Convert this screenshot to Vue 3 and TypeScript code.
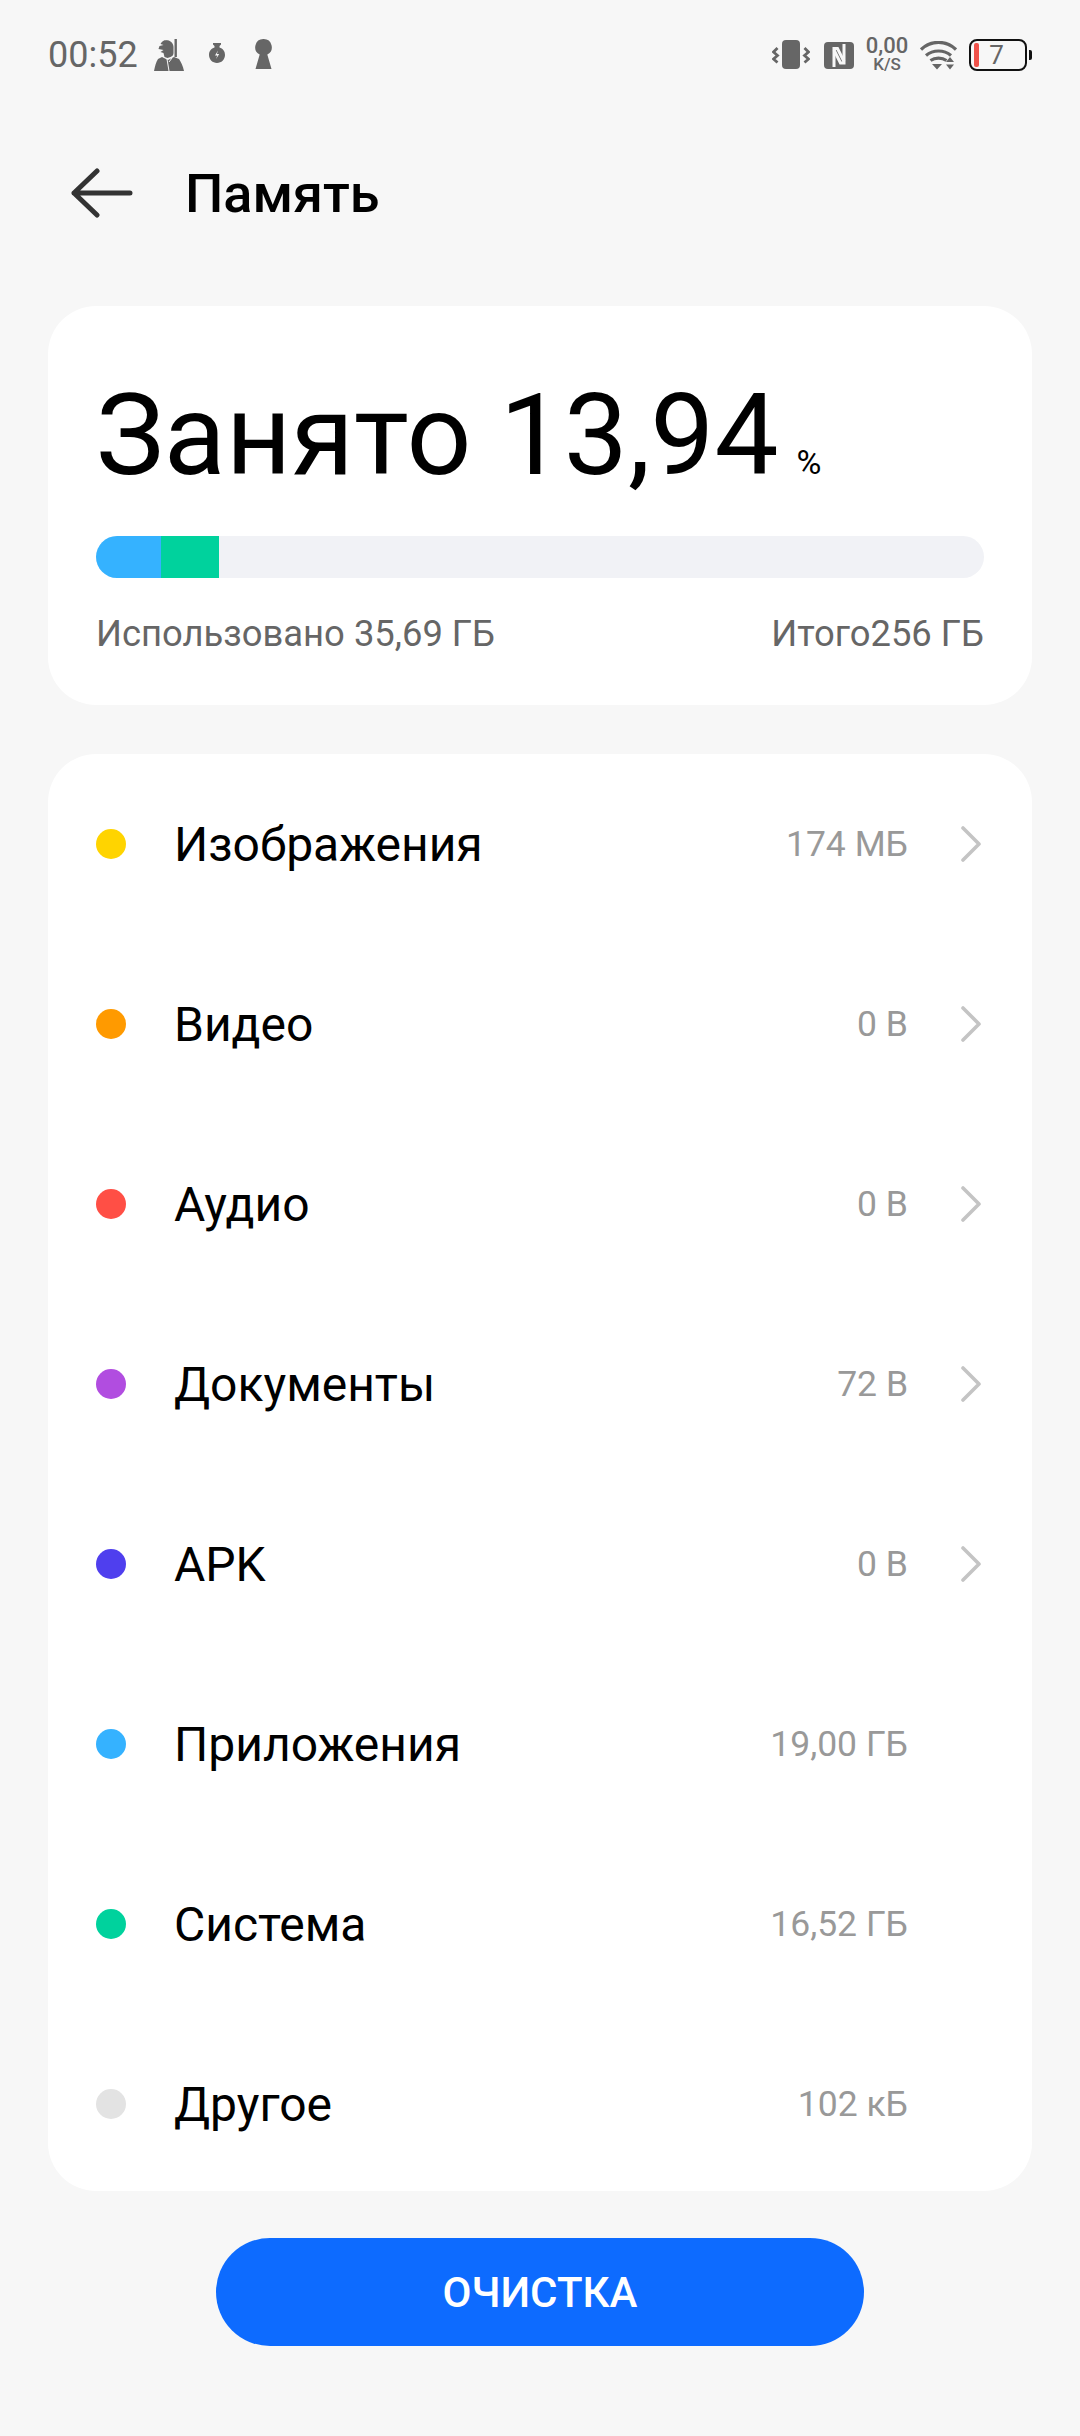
<template>
  <div class="page">
    <div class="status-bar">
      <div class="status-left">
        <span class="time">00:52</span>
        <svg class="st-soldier" width="30" height="32" viewBox="0 0 30 32">
          <path d="M20.500 0h2.400v18h-2.400z" fill="#666" />
          <path d="M12 1c4 0 7.500 3 7.500 7v6c0 2-1 3-3 4l-3 1-3-1-1-4-3-1 3-2-5-1 1-3 4-1-3-1c1-2 3-4 6-4z" fill="#666" />
          <path d="M8 18l6 3 6-3 5 2c2 3 4 7 5 12H0c1-5 2-9 4-12z" fill="#666" />
          <path d="M13 20l2 12M18 19l-3 4" stroke="#f7f7f7" stroke-width="1" fill="none" />
        </svg>
        <svg class="st-bottle" width="16" height="20" viewBox="0 0 16 20">
          <path d="M4 0h8v1.500l-1.500 1.500v1.400C13.800 5.400 16 8 16 12c0 4.400-3.600 8-8 8s-8-3.600-8-8c0-4 2.200-6.600 5.500-7.600V3L4 1.500z" fill="#666" />
          <path d="M9 7.500l-3 5h2.300l-1.300 3.500 3.200-5H7.900z" fill="#f7f7f7" />
        </svg>
        <svg class="st-key" width="17" height="30" viewBox="0 0 17 30">
          <path d="M8.500 0a8.200 8.200 0 0 1 3.800 15.500L16.500 30H.5L4.700 15.500A8.200 8.200 0 0 1 8.500 0z" fill="#666" />
        </svg>
      </div>
      <div class="status-right">
        <svg width="38" height="30" viewBox="0 0 38 30">
          <rect x="10" y="0" width="18" height="29" rx="4" fill="#666" />
          <path d="M5.500 8L1.500 12l4 3.500-4 3.500 4 3.500M32.500 8l4 4-4 3.500 4 3.500-4 3.500" stroke="#666" stroke-width="2.800" fill="none" />
        </svg>
        <svg class="st-nfc" width="30" height="27" viewBox="0 0 30 27">
          <rect width="30" height="27" rx="4" fill="#666" />
          <path d="M10 25V6.500h3.500L20 19.500" stroke="#f7f7f7" stroke-width="3" fill="none" />
          <path d="M20 2v19h-3.500L10 8" stroke="#f7f7f7" stroke-width="3" fill="none" />
        </svg>
        <div class="speed"><span>0,00</span><span class="unit">K/S</span></div>
        <svg class="st-wifi" width="37" height="29" viewBox="0 0 37 29">
          <path d="M1 8.500c10-9.500 25-9.500 35 0M6 14.500c7-6 18-6 25 0M10.500 19.500c4.500-3.200 11.500-3.200 16 0" stroke="#666" stroke-width="3.200" fill="none" />
          <path d="M12 23h10l-5 5.500zM26 21l4-5 4 5zM26 23.500h8l-4 5z" fill="#666" />
        </svg>
        <div class="battery">
          <span class="battery-level"></span>
          <span class="battery-num">7</span>
          <span class="battery-tip"></span>
        </div>
      </div>
    </div>

    <header class="top-bar">
      <svg width="62" height="52" viewBox="0 0 62 52">
        <path d="M26 4L3 26l23 22M3 26h56" stroke="#333" stroke-width="5" stroke-linecap="round" stroke-linejoin="round" fill="none" />
      </svg>
      <h1>Память</h1>
    </header>

    <section class="card summary">
      <div class="used-line">Занято 13,94<span class="pct">%</span></div>
      <div class="bar">
        <span class="seg" v-for="s in segments" :key="s.color" :style="{ width: s.width + 'px', backgroundColor: s.color }"></span>
      </div>
      <div class="totals">
        <span>Использовано 35,69 ГБ</span>
        <span>Итого256 ГБ</span>
      </div>
    </section>

    <section class="card list">
      <div class="row" v-for="item in items" :key="item.name">
        <span class="dot" :style="{ backgroundColor: item.color }"></span>
        <span class="name">{{ item.name }}</span>
        <span class="size">{{ item.size }}</span>
        <span class="chev-slot">
          <svg v-if="item.arrow" width="21" height="36" viewBox="0 0 21 36">
            <path d="M2 2l16 16L2 34" stroke="#c4c4c4" stroke-width="3.600" stroke-linecap="round" stroke-linejoin="round" fill="none" />
          </svg>
        </span>
      </div>
    </section>

    <button class="clean-btn">ОЧИСТКА</button>
  </div>
</template>

<script setup lang="ts">
interface Item {
  name: string
  size: string
  color: string
  arrow: boolean
}

const segments = [
  { color: '#35b2ff', width: 65 },
  { color: '#00d29d', width: 58 },
]

const items: Item[] = [
  { name: 'Изображения', size: '174 МБ', color: '#ffd400', arrow: true },
  { name: 'Видео', size: '0 B', color: '#ff9a00', arrow: true },
  { name: 'Аудио', size: '0 B', color: '#ff4f45', arrow: true },
  { name: 'Документы', size: '72 B', color: '#b14de0', arrow: true },
  { name: 'APK', size: '0 B', color: '#4f3fee', arrow: true },
  { name: 'Приложения', size: '19,00 ГБ', color: '#35b2ff', arrow: false },
  { name: 'Система', size: '16,52 ГБ', color: '#00d29d', arrow: false },
  { name: 'Другое', size: '102 кБ', color: '#e3e3e3', arrow: false },
]
</script>

<style>
html,
body {
  background: #f7f7f7;
}
</style>

<style scoped>
.page {
  width: 1080px;
  height: 2436px;
  overflow: hidden;
  background: #f7f7f7;
  font-family: Roboto, "Noto Sans", sans-serif;
  color: #000;
}

.status-bar {
  height: 110px;
  display: flex;
  align-items: center;
  justify-content: space-between;
  padding: 0 48px;
  color: #666;
}

.status-left,
.status-right {
  display: flex;
  align-items: center;
}

.time {
  font-size: 36px;
  margin-right: 16px;
}

.st-bottle {
  margin-left: 25px;
  margin-top: -4px;
}

.st-key {
  margin-left: 30px;
  margin-top: -2px;
}

.st-nfc {
  margin-left: 14px;
}

.speed {
  display: flex;
  flex-direction: column;
  align-items: center;
  margin-left: 14px;
  width: 38px;
  font-size: 22px;
  font-weight: 500;
  line-height: 19px;
}

.speed .unit {
  font-size: 17px;
}

.st-wifi {
  margin-left: 14px;
}

.battery {
  position: relative;
  width: 58px;
  height: 32px;
  margin-left: 12px;
  margin-right: 5px;
  box-sizing: border-box;
  border: 2.500px solid #111;
  border-radius: 8px;
  display: flex;
  align-items: center;
  justify-content: center;
  font-size: 26px;
  color: #666;
}

.battery-level {
  position: absolute;
  left: 3px;
  top: 2px;
  bottom: 2px;
  width: 5px;
  border-radius: 2px;
  background: #f0524a;
}

.battery-num {
  margin-left: -3px;
}

.battery-tip {
  position: absolute;
  right: -7px;
  top: 9px;
  width: 3px;
  height: 10px;
  background: #111;
  border-radius: 0 2px 2px 0;
}

.top-bar {
  height: 166px;
  display: flex;
  align-items: center;
  padding-left: 71px;
}

.top-bar h1 {
  margin: 0 0 0 52px;
  font-size: 54px;
  font-weight: 500;
}

.card {
  margin: 0 48px;
  background: #fff;
  border-radius: 48px;
}

.summary {
  margin-top: 30px;
  height: 399px;
  box-sizing: border-box;
  padding: 64px 48px 0;
}

.used-line {
  font-size: 114px;
  line-height: 130px;
  white-space: nowrap;
}

.pct {
  font-size: 34px;
  line-height: 1;
  margin-left: 18px;
}

.bar {
  display: flex;
  height: 42px;
  margin-top: 36px;
  border-radius: 21px;
  background: #f1f2f6;
  overflow: hidden;
}

.seg {
  display: block;
  height: 100%;
}

.totals {
  display: flex;
  justify-content: space-between;
  margin-top: 34px;
  font-size: 36.400px;
  color: #666;
}

.list {
  margin-top: 49px;
  height: 1437px;
  padding: 0 48px;
}

.row {
  display: flex;
  align-items: center;
  height: 180px;
}

.dot {
  width: 30px;
  height: 30px;
  border-radius: 50%;
  margin-right: 48px;
  flex: none;
}

.name {
  flex: 1;
  font-size: 48px;
}

.size {
  font-size: 35.500px;
  color: #999;
}

.chev-slot {
  width: 74px;
  margin-right: 2px;
  display: flex;
  justify-content: flex-end;
  flex: none;
  height: 36px;
}

.clean-btn {
  display: block;
  width: 648px;
  height: 108px;
  margin: 47px auto 0;
  border: none;
  border-radius: 54px;
  background: #0d6bff;
  color: #fff;
  font-family: inherit;
  font-size: 42px;
  font-weight: 500;
}
</style>
